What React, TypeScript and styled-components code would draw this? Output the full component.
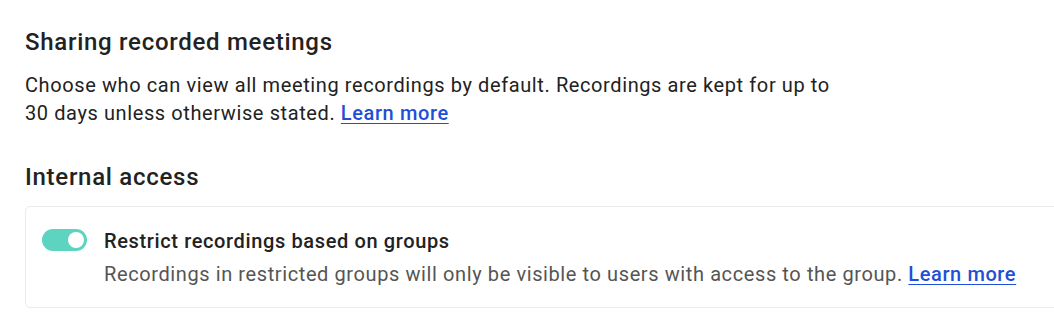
import React from "react";
import styled, { createGlobalStyle } from "styled-components";

const Global = createGlobalStyle`
  html, body { margin: 0; padding: 0; background: #ffffff; overflow: hidden; }
  body { font-family: Roboto, "Noto Sans", Arial, sans-serif; -webkit-font-smoothing: antialiased; }
`;

const Page = styled.div`
  width: 1100px;
  padding: 28px 0 0 25px;
  box-sizing: border-box;
  color: #202124;
`;

const Heading = styled.h2<{ $top?: number }>`
  margin: ${(p) => p.$top ?? 0}px 0 0 0;
  font-size: 24px;
  line-height: 28px;
  font-weight: 500;
  color: #222;
  letter-spacing: 0.72px;
`;

const Paragraph = styled.p`
  margin: 15px 0 0 0;
  max-width: 830px;
  font-size: 20px;
  line-height: 28px;
  letter-spacing: 0.6px;
  color: #222;
`;

const Link = styled.a`
  color: #1e4fd6;
  font-weight: 500;
  text-decoration: underline;
  text-decoration-thickness: 1px;
  text-underline-offset: 3px;
  cursor: pointer;
`;

const Card = styled.div`
  margin-top: 15px;
  width: 1060px;
  box-sizing: border-box;
  border: 1px solid #ebebeb;
  border-radius: 5px;
  padding: 20px 16px 19px 16px;
  display: flex;
  gap: 17px;
  align-items: flex-start;
`;

const Toggle = styled.div<{ $on: boolean }>`
  flex: none;
  margin-top: 2px;
  width: 45px;
  height: 22px;
  border-radius: 11px;
  background: ${(p) => (p.$on ? "#5dd4bf" : "#ccc")};
  position: relative;
  &::after {
    content: "";
    position: absolute;
    top: 3px;
    left: ${(p) => (p.$on ? "26px" : "3px")};
    width: 16px;
    height: 16px;
    border-radius: 50%;
    background: #fff;
  }
`;

const CardText = styled.div`
  display: flex;
  flex-direction: column;
  gap: 5px;
`;

const CardTitle = styled.div`
  font-size: 20px;
  line-height: 28px;
  font-weight: 500;
  letter-spacing: 0.63px;
  color: #222;
`;

const CardDesc = styled.div`
  font-size: 20px;
  line-height: 28px;
  letter-spacing: 0.6px;
  color: #555;
`;

export default function App() {
  return (
    <>
      <Global />
      <Page>
        <Heading>Sharing recorded meetings</Heading>
        <Paragraph>
          Choose who can view all meeting recordings by default. Recordings are kept for up to 30 days unless otherwise
          stated. <Link>Learn more</Link>
        </Paragraph>
        <Heading $top={36}>Internal access</Heading>
        <Card>
          <Toggle $on={true} />
          <CardText>
            <CardTitle>Restrict recordings based on groups</CardTitle>
            <CardDesc>
              Recordings in restricted groups will only be visible to users with access to the group.{" "}
              <Link>Learn more</Link>
            </CardDesc>
          </CardText>
        </Card>
      </Page>
    </>
  );
}
